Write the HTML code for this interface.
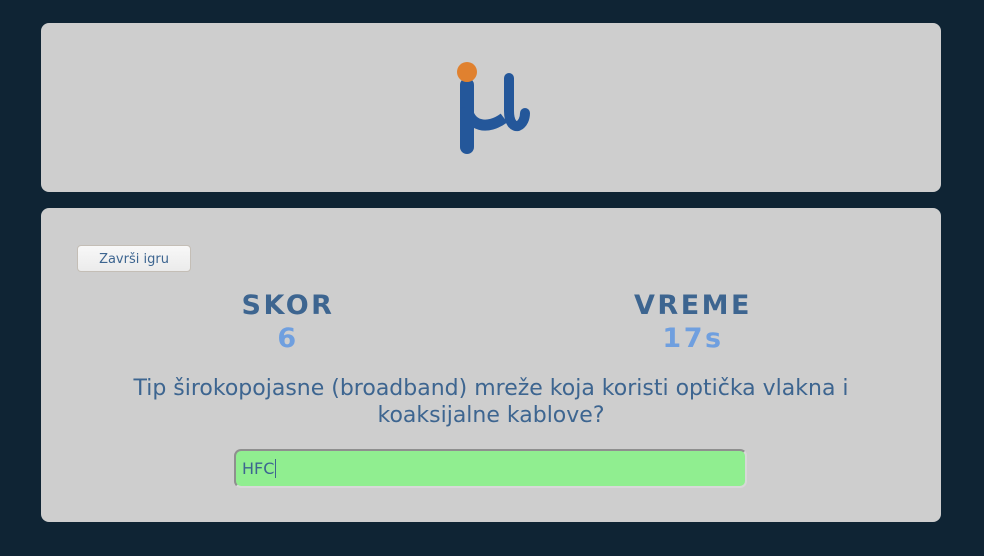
<!DOCTYPE html>
<html><head><style>
body{margin:0;width:984px;height:556px;background:#0f2434;font-family:"DejaVu Sans","Liberation Sans",sans-serif;position:relative;overflow:hidden}
.p{position:absolute;left:41px;width:900px;background:#cecece;border-radius:8px}
.btn{position:absolute;left:36px;top:37px;width:114px;height:27px;box-sizing:border-box;border:1px solid #c4beb6;border-radius:4px;background:linear-gradient(#f8f8f8,#ebebeb);font-size:13px;color:#3d6590;text-align:center;line-height:27px}
.h{position:absolute;width:300px;text-align:center;font-weight:bold;font-size:27px;letter-spacing:2.5px;color:#3d6590}
.v{position:absolute;width:300px;text-align:center;font-weight:bold;font-size:27px;letter-spacing:2.5px;color:#6f9fdf}
.q{position:absolute;left:40px;width:820px;top:167px;text-align:center;font-size:22px;line-height:27px;color:#3d6590}
.in{position:absolute;left:193px;top:241px;width:513px;height:39px;box-sizing:border-box;background:#90ee90;border:2px solid #d8d8d8;border-top-color:#8f8f8f;border-left-color:#8f8f8f;border-radius:7px;font-size:16px;color:#3d6590;padding:8px 0 0 6px}
</style></head><body>
<div class="p" style="top:23px;height:169px">
<svg style="position:absolute;left:405px;top:36px" width="100" height="100" viewBox="0 0 100 100">
<path d="M21 26 V88" stroke="#24579a" stroke-width="14" stroke-linecap="round" fill="none"/>
<path d="M21 48 C23 68 42 71 58 59" stroke="#24579a" stroke-width="11" fill="none"/>
<path d="M63 19 V52 C63 64 68 68 72 67 C77 65 79 59 79 54" stroke="#24579a" stroke-width="10" stroke-linecap="round" fill="none"/>
<circle cx="21" cy="13" r="10" fill="#e0812f"/>
</svg>
</div>
<div class="p" style="top:208px;height:314px">
<div class="btn">Završi igru</div>
<div class="h" style="left:97px;top:82px">SKOR</div>
<div class="v" style="left:97px;top:115px">6</div>
<div class="h" style="left:502px;top:82px">VREME</div>
<div class="v" style="left:502px;top:115px">17s</div>
<div class="q">Tip širokopojasne (broadband) mreže koja koristi optička vlakna i koaksijalne kablove?</div>
<div class="in">HFC<span style="border-left:1px solid #3d6590;margin-left:1px"></span></div>
</div>
</body></html>
